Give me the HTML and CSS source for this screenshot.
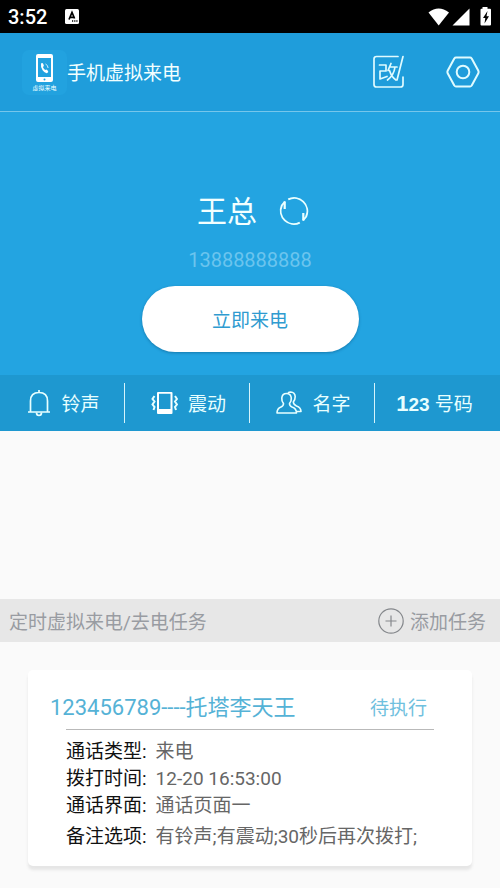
FILE: index.html
```html
<!DOCTYPE html>
<html lang="zh-CN">
<head>
<meta charset="utf-8">
<meta name="viewport" content="width=device-width, initial-scale=1">
<title>手机虚拟来电</title>
<link rel="stylesheet" href="styles.css">
</head>
<body>
<div class="status">
  <time class="clock">3:52</time>
  <svg class="input-mode" width="14" height="15" viewBox="0 0 14 15" aria-hidden="true">
    <rect width="14" height="15" rx="1.5" fill="#fff"/>
    <path d="M4 10.5 7 3.5l2.6 6M5 8.3h4" fill="none" stroke="#000" stroke-width="1.7"/>
    <path d="M7 12h1.2M9.2 12h1.2M11.3 12h1.2" stroke="#000" stroke-width="1.3"/>
  </svg>
  <svg class="signals" width="64" height="20" viewBox="0 0 64 20" fill="#fff" aria-hidden="true">
    <path d="M0.500 5.500Q10.500-2.500 21 5.500L10.700 18.500Z"/>
    <path d="M41.500 1.500V18.500H24.500Z"/>
    <path d="M54.500 1.800V0h5v1.800H62q1 0 1 1V17.500q0 1-1 1H53.500q-1 0-1-1V2.800q0-1 1-1Z"/>
    <path d="M59.500 4 55 11h2.300l-.8 5.500L61 9.300h-2.500Z" fill="#000"/>
  </svg>
</div>

<header class="header">
  <span class="logo">
    <svg width="45" height="45" viewBox="0 0 45 45" aria-hidden="true">
      <path fill-rule="evenodd" fill="#fff" d="M16 4h13q2 0 2 2v24q0 2-2 2H16q-2 0-2-2V6q0-2 2-2Zm0 4v19h13V8Z"/>
      <circle cx="22.500" cy="29.500" r="1" fill="#24a4e0"/>
      <path d="M19 13.500q1.500-1 2.300.6l.6 1.800-1 1.200q.8 1.900 2.300 2.900l1.300-.6 1.600 1.500q.6 1.300-1 2.200-2.300.4-4.500-2.800T19 13.500Z" fill="#fff"/>
      <path d="M23.500 14q2.400 1 2.600 4" fill="none" stroke="#fff" stroke-width=".8"/>
    </svg>
    <span class="logo-text">虚拟来电</span>
  </span>
  <h1 class="title">手机虚拟来电</h1>
  <button class="icon-button" aria-label="修改">
    <svg width="32" height="34" viewBox="0 0 32 34" fill="none" stroke="#e0fbff" stroke-width="1.700" stroke-linecap="round" stroke-linejoin="round">
      <path d="M25 1.500H3.500Q1 1.500 1 4V29.500Q1 32 3.500 32H27.500Q30 32 30 29.500V22"/>
      <path d="M30 1.500 24 25"/>
      <path d="M6.500 10H13V16H7V24L14 21.500M18 8.500 15 15.500M16.500 12H24M22 12Q21 20 14.500 25M16.500 15.500Q18.500 22 23 25"/>
    </svg>
  </button>
  <button class="icon-button" aria-label="设置">
    <svg width="34" height="32" viewBox="0 0 34 32" fill="none" stroke="#e0fbff" stroke-width="2" stroke-linejoin="round">
      <path d="M10 1.500H24Q25 1.500 25.700 2.500L32.200 14.500Q33 16 32.200 17.500L25.700 29.500Q25 30.500 24 30.500H10Q9 30.500 8.300 29.500L1.800 17.500Q1 16 1.800 14.500L8.300 2.500Q9 1.500 10 1.500Z"/>
      <circle cx="17" cy="16" r="6.300"/>
    </svg>
  </button>
</header>

<main>
  <section class="hero">
    <div class="caller">
      <span class="caller-name">王总</span>
      <button class="icon-button" aria-label="刷新">
        <svg width="30" height="30" viewBox="0 0 30 30" fill="none" stroke="#eaffff" stroke-width="1.900">
          <path d="M9.200 2.400A13.200 13.200 0 0 1 27.200 19.500L24 23.500"/>
          <path d="M20.800 25.600A13.200 13.200 0 0 1 2.800 8.500L6 4.500"/>
          <path d="M5.700 4.500V12M24.300 23.500V16" stroke-width="2.200"/>
        </svg>
      </button>
    </div>
    <p class="caller-number">13888888888</p>
    <button class="call">立即来电</button>
  </section>

  <nav class="tabs">
    <button class="tab">
      <svg width="24" height="28" viewBox="0 0 24 28" fill="none" stroke="#e8ffff" stroke-width="1.700" stroke-linejoin="round">
        <path d="M1 23H23M3.500 23V12Q3.500 3.500 12 3.500T20.500 12V23M12 3.500V1"/>
        <path d="M9.500 23.500Q9.500 26.500 12 26.500T14.500 23.500"/>
      </svg>
      <span class="label">铃声</span>
    </button>
    <button class="tab">
      <svg width="27" height="24" viewBox="0 0 27 24" fill="none" stroke="#e8ffff" stroke-width="2">
        <path fill="#fff" fill-rule="evenodd" stroke="none" d="M7 1H20.500q1 0 1 1V22q0 1-1 1H7q-1 0-1-1V2q0-1 1-1ZM8 2.800V18H19.500V2.800Z"/>
        <path d="M3.500 5 1.500 8 3.500 10.500 1.500 13.500 3.500 16 2.500 19M24 5 26 8 24 10.500 26 13.500 24 16 25 19"/>
      </svg>
      <span class="label">震动</span>
    </button>
    <button class="tab">
      <svg width="26" height="24" viewBox="0 0 26 24" fill="none" stroke="#e8ffff" stroke-width="1.600" stroke-linejoin="round">
        <path d="M7.500 12.500Q5.500 10 5.800 7 6.200 2.500 10.500 2.500T15.300 7Q15.600 10 13.500 12.500 13.500 15 16 16 20.500 17.500 20.500 22H1Q1 17.500 5 16 7.500 15 7.500 12.500Z"/>
        <path d="M12 1.900Q13 1 14.700 1 18.800 1.300 19.200 5.500 19.300 8.500 17.300 11 17.500 13.500 20.500 15 25 16.500 25 20.500H21"/>
      </svg>
      <span class="label">名字</span>
    </button>
    <button class="tab tab-number">
      <span class="digits" aria-hidden="true"><b class="digit-big">1</b>23</span>
      <span class="label">号码</span>
    </button>
  </nav>

  <section class="tasks">
    <div class="tasks-bar">
      <h2 class="label">定时虚拟来电/去电任务</h2>
      <button class="add">
        <svg width="26" height="26" viewBox="0 0 26 26" fill="none" stroke="#85888c" stroke-width="1.200">
          <circle cx="13" cy="13" r="12.200"/>
          <path d="M7.500 13H18.500M13 7.500V18.500"/>
        </svg>
        <span class="label">添加任务</span>
      </button>
    </div>
    <article class="card">
      <div class="card-head">
        <h3 class="card-title">123456789----托塔李天王</h3>
        <span class="card-state">待执行</span>
      </div>
      <dl class="details">
        <div class="row"><dt>通话类型:</dt><dd>来电</dd></div>
        <div class="row"><dt>拨打时间:</dt><dd>12-20 16:53:00</dd></div>
        <div class="row"><dt>通话界面:</dt><dd>通话页面一</dd></div>
        <div class="row row-last"><dt>备注选项:</dt><dd>有铃声;有震动;30秒后再次拨打;</dd></div>
      </dl>
    </article>
  </section>
</main>
</body>
</html>
```

FILE: styles.css
```css
* {
  box-sizing: border-box;
}

body {
  margin: 0;
  background: #fafafa;
  font-family: Roboto, "Noto Sans CJK SC", sans-serif;
  font-size: 19px;
  line-height: 28px;
}

h1, h2, h3, p, dl, dd {
  margin: 0;
  font-size: inherit;
  font-weight: 400;
}

button {
  padding: 0;
  border: 0;
  background: none;
  color: inherit;
  font: inherit;
  cursor: pointer;
}

svg {
  display: block;
  flex: none;
}

.label,
.title,
.call {
  padding-top: 4px;
}

.status {
  display: flex;
  align-items: center;
  height: 33px;
  padding: 0 8px;
  background: #000;
  color: #fff;
}

.clock {
  font-size: 20px;
  font-weight: 500;
}

.input-mode {
  margin-left: 18px;
}

.signals {
  margin-left: auto;
}

.header {
  display: flex;
  align-items: center;
  height: 79px;
  padding: 0 20px 0 22px;
  border-bottom: 1px solid #75c6eb;
  background: #1f9ddb;
  color: #f2ffff;
}

.logo {
  position: relative;
  border-radius: 7px;
  background: #22a2df;
}

.logo-text {
  position: absolute;
  right: 0;
  bottom: 3px;
  left: 0;
  font-size: 6px;
  line-height: 8px;
  text-align: center;
}

.title {
  flex: 1;
}

.header .icon-button + .icon-button {
  margin-left: 41px;
}

.hero {
  display: flex;
  flex-direction: column;
  align-items: center;
  padding: 78px 0 23px;
  background: #23a4e1;
}

.caller {
  display: flex;
  align-items: center;
  gap: 22px;
  padding-left: 6px;
  color: #f2ffff;
}

.caller-name {
  font-size: 30px;
  line-height: 44px;
}

.caller-number {
  padding-top: 12px;
  color: #6bc4ee;
  font-size: 20px;
}

.call {
  width: 217px;
  height: 66px;
  margin-top: 12px;
  border-radius: 33px;
  background: #fff;
  box-shadow: 0 1px 3px rgba(0, 60, 100, 0.4);
  color: #2f9bd0;
}

.tabs {
  display: grid;
  grid-template-columns: repeat(4, 1fr);
  height: 56px;
  padding: 8px 0;
  background: #1e98d0;
  color: #e8ffff;
}

.tab {
  display: flex;
  align-items: center;
  justify-content: center;
  gap: 10px;
  padding-left: 3px;
  border-right: 1px solid #d5f4fc;
}

.tab-number {
  gap: 5px;
  padding: 0 6px 0 0;
  border: 0;
}

.digits {
  padding-top: 2px;
  font-family: "Liberation Sans", sans-serif;
  font-weight: 700;
}

.digit-big {
  font-size: 22px;
}

.tasks {
  padding-top: 168px;
}

.tasks-bar {
  display: flex;
  align-items: center;
  justify-content: space-between;
  height: 43px;
  padding: 0 14px 0 9px;
  background: #e7e7e7;
  color: #999ca2;
}

.add {
  display: flex;
  align-items: center;
  gap: 6px;
}

.card {
  margin: 28px 28px 17px;
  padding: 20px 38px 16px;
  border-radius: 5px;
  background: #fff;
  box-shadow: 0 4px 3px #e6e6e6;
}

.card-head {
  display: flex;
  align-items: center;
  justify-content: space-between;
  margin: 0 7px 0 -16px;
  padding-bottom: 4px;
  color: #55b2d6;
}

.card-title {
  font-size: 22px;
  line-height: 35px;
}

.card-state {
  padding-top: 2px;
  color: #6fc0de;
}

.details {
  padding-top: 8px;
  border-top: 1px solid #b9b9b9;
}

.row {
  display: flex;
  gap: 9px;
  line-height: 27px;
}

.row-last {
  padding-top: 4px;
}

dt {
  flex: none;
  color: #111;
}

dd {
  margin-right: -20px;
  color: #666;
}
```
